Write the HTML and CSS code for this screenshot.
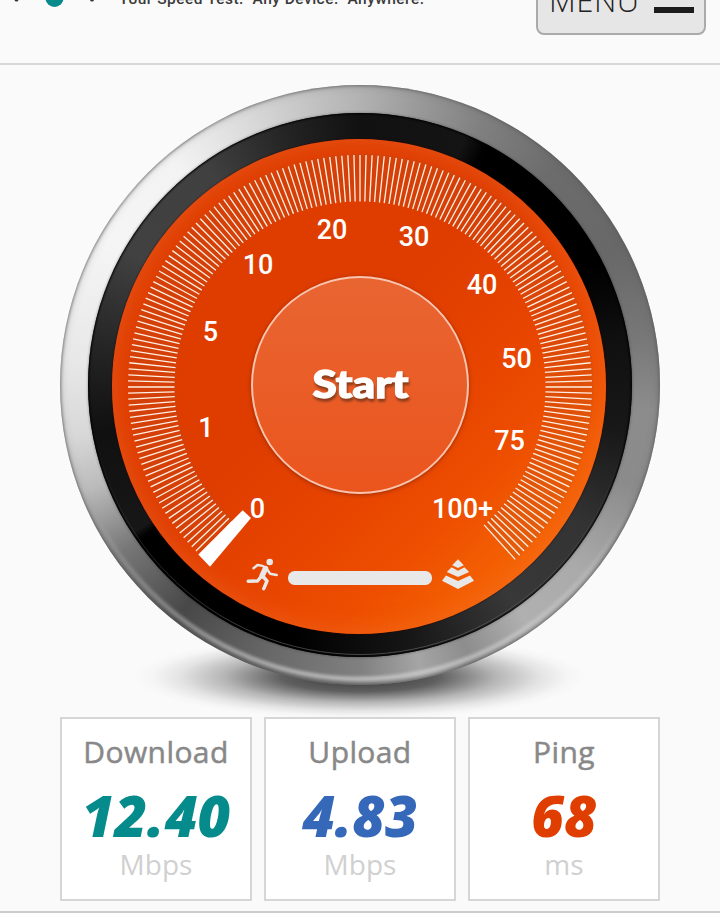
FILE: index.html
```html
<!DOCTYPE html>
<html lang="en">
<head>
<meta charset="utf-8">
<title>Speed Test</title>
<link rel="stylesheet" href="styles.css">
</head>
<body>
<header class="header">
  <svg class="brand" width="440" height="20" viewBox="0 0 440 20">
    <circle cx="54.5" cy="-2" r="9" fill="#068a8c"/>
    <circle cx="16.500" cy="-.5" r="2" fill="#333"/>
    <circle cx="92" cy="-.5" r="2" fill="#333"/>
    <text class="tagline" x="119" y="4" textLength="305" xml:space="preserve">Your Speed Test.  Any Device.  Anywhere.</text>
  </svg>
  <button class="menu"><span class="menu-label">MENU</span><span class="menu-icon"></span></button>
</header>
<main class="main">
  <section class="gauge">
    <div class="shadow"></div>
    <div class="metal"><div class="bezel"><div class="face"></div></div></div>
    <svg class="dial" width="600" height="600" viewBox="60 85 600 600">
      <defs>
        <linearGradient id="btn" x1="0" y1="0" x2="0" y2="1">
          <stop offset="0" stop-color="#e86532"/><stop offset="1" stop-color="#eb551d"/>
        </linearGradient>
        <linearGradient id="glint" x1="0" y1="0" x2="0" y2="1">
          <stop offset=".6" stop-color="#777" stop-opacity="0"/><stop offset="1" stop-color="#777" stop-opacity=".55"/>
        </linearGradient>
        <linearGradient id="rim" x1="0" y1="0" x2="0" y2="1">
          <stop offset=".7" stop-color="#ddd" stop-opacity="0"/><stop offset="1" stop-color="#ddd" stop-opacity=".6"/>
        </linearGradient>
      </defs>
      <circle cx="360" cy="385" r="269.500" fill="none" stroke="url(#glint)"/>
      <circle class="rim" cx="360" cy="384" r="295" fill="none" stroke="url(#rim)"/>
      <path class="band" d="M 219.300 538.500 A 208.500 208.500 0 1 1 499.500 541.900"/>
      <g id="ticks" class="ticks"></g>
      <g class="numbers">
        <text x="257.500" y="518">0</text>
        <text x="206" y="437">1</text>
        <text x="210.500" y="341">5</text>
        <text x="258" y="274">10</text>
        <text x="332" y="239">20</text>
        <text x="414" y="246">30</text>
        <text x="482" y="294">40</text>
        <text x="516.500" y="368">50</text>
        <text x="509.500" y="450">75</text>
        <text x="462.500" y="518">100+</text>
      </g>
      <path d="M198.300 554.500 L210 566.800 L251 518 L242.700 510.200 Z" fill="#fff"/>
      <circle class="start-ring" cx="360" cy="385" r="108" fill="url(#btn)"/>
      <text class="start" x="360.500" y="397.500" textLength="96" lengthAdjust="spacingAndGlyphs">Start</text>
      <g class="runner">
        <circle cx="269.700" cy="562" r="3.300"/>
        <path class="torso" d="M265.500 568.500 L262 576"/>
        <path d="M253.500 568.300 L257.500 565 Q261.500 565 266 567.500 L270 573.700 L276.700 575"/>
        <path class="leg" d="M263 576.500 L267 581 L263.800 588.700 M260.800 577 L257.500 581 L248.200 581.300"/>
      </g>
      <rect x="288" y="571" width="144" height="14" rx="6.500" fill="#e8e8e8"/>
      <g fill="#e8e8e8">
        <path d="M458 559.300 L463.800 565.300 L458 568 L452.200 565.300 Z"/>
        <path d="M451.600 567.300 L458 570.700 L464.400 567.300 L469.200 572 L458 577 L446.800 572 Z"/>
        <path d="M446 575.500 L458 581 L470 575.500 L474 580.700 L458 589 L442 580.700 Z"/>
      </g>
    </svg>
  </section>
  <section class="results">
    <div class="card"><div class="label">Download</div><div class="value download">12.40</div><div class="unit">Mbps</div></div>
    <div class="card"><div class="label">Upload</div><div class="value upload">4.83</div><div class="unit">Mbps</div></div>
    <div class="card"><div class="label">Ping</div><div class="value ping">68</div><div class="unit">ms</div></div>
  </section>
</main>
<script src="ticks.js"></script>
</body>
</html>
```
FILE: styles.css
```css
* { box-sizing: border-box; }
body { margin: 0; height: 913px; overflow: hidden; background: #fafafa; font-family: "Open Sans", sans-serif; border-bottom: 2px solid #ccc; }
.header { height: 65px; border-bottom: 2px solid #d8d8d8; display: flex; justify-content: space-between; align-items: flex-start; padding-right: 14px; overflow: hidden; }
.brand { display: block; }
.tagline { font: 500 15.5px Roboto, sans-serif; fill: #3a3a3a; white-space: pre; }
.menu { width: 170px; height: 70px; margin: -35px 0 0; padding: 0 10px 0 11px; display: flex; justify-content: space-between; align-items: flex-end; background: #e6e6e6; border: 2px solid #aaa; border-radius: 8px; color: #222; font-family: "Open Sans", sans-serif; }
.menu-label { font-size: 31px; font-weight: 300; line-height: 30px; height: 48px; letter-spacing: .5px; }
.menu-icon { width: 40px; height: 40px; margin-bottom: 20px; border-bottom: 6px solid #1c1c1c; }
.main { padding: 20px 60px 0; }
.gauge { position: relative; height: 632px; }
.shadow { position: absolute; left: 75px; top: 550px; width: 450px; height: 84px; background: radial-gradient(closest-side, rgba(0,0,0,.78), rgba(0,0,0,.62) 35%, rgba(0,0,0,.28) 60%, rgba(0,0,0,.09) 80%, rgba(0,0,0,.02) 92%, transparent); }
.metal { position: relative; width: 600px; height: 600px; padding: 28px; border-radius: 50%; box-shadow: inset 0 0 3px 1px rgba(90,90,90,.7), inset 0 0 8px rgba(90,90,90,.3);
  background: conic-gradient(#b2b2b2 0deg, #999 12deg, #808080 25deg, #6c6c6c 42deg, #686868 62deg, #777 80deg, #8c8c8c 95deg, #8b8b8b 110deg, #aaa 130deg, #b0b0b0 145deg, #8d8d8d 158deg, #a5a5a5 168deg, #808080 180deg, #696969 198deg, #484848 218deg, #777 235deg, #bbb 249deg, #d8d8d8 260deg, #e8e8e8 275deg, #f5f5f5 300deg, #f3f3f3 320deg, #ddd 335deg, #c3c3c3 350deg, #b2b2b2 360deg); }
.bezel { width: 544px; height: 544px; padding: 26px 26px 23px 24px; border-radius: 50%; box-shadow: inset 0 0 2px 1px #000, 0 0 3px rgba(0,0,0,.4);
  background: conic-gradient(#111 0deg, #141414 23deg, #000 28deg, #000 63deg, #101010 80deg, #181818 100deg, #333 122deg, #383838 145deg, #151515 170deg, #080808 185deg, #000 195deg, #000 235deg, #171717 237deg, #101010 260deg, #272727 280deg, #414141 300deg, #404040 325deg, #222 345deg, #111 360deg); }
.face { width: 494px; height: 495px; border-radius: 50%; box-shadow: inset 0 0 22px 3px rgba(240,110,50,.42), 0 0 2px #300;
  background: linear-gradient(135deg, #df3d00 0%, #df3d00 45%, #e74400 60%, #ed4e00 72%, #f86a05 88%); }
.dial { position: absolute; left: 0; top: 0; }
.rim { stroke-width: 5; filter: blur(1.5px); }
.band { fill: none; stroke: rgba(170,80,40,.2); stroke-width: 47; }
.ticks { stroke: #fff0e4; stroke-width: 1.3; }
.numbers { font: 500 27px Roboto, sans-serif; fill: #fff; text-anchor: middle; }
.start-ring { stroke: #f9c4ae; stroke-width: 2; filter: drop-shadow(0 1px 2px rgba(90,20,0,.5)); }
.start { font: 900 37px Lato, sans-serif; fill: #fff; stroke: #fff; stroke-width: 1.3; text-anchor: middle; filter: drop-shadow(1px 3px 1px rgba(80,40,20,.6)); }
.runner { fill: none; stroke: #e8e8e8; stroke-width: 2.4; stroke-linecap: round; stroke-linejoin: round; }
.runner circle { fill: #e8e8e8; stroke: none; }
.runner .torso { stroke-width: 5.4; }
.runner .leg { stroke-width: 3.4; }
.results { display: grid; grid-template-columns: repeat(3, 1fr); gap: 12px; position: relative; }
.card { height: 184px; padding-top: 13px; border: 2px solid #d6d6d6; background: #fff; text-align: center; }
.label { font-size: 30px; line-height: 40px; font-weight: 500; letter-spacing: .4px; -webkit-text-stroke: .5px #888; color: #888; }
.value { font-size: 56.5px; line-height: 74px; font-weight: 800; font-style: italic; margin-top: 7px; }
.download { color: #068b8c; }
.upload { color: #3568b9; }
.ping { color: #e03d00; }
.unit { font-size: 28px; line-height: 30px; margin-top: -4px; color: #d0d0d0; }
```
FILE: ticks.js
```js
const group = document.getElementById("ticks");
for (let angle = -136.5; angle <= 138; angle += 1.5) {
  const line = document.createElementNS("http://www.w3.org/2000/svg", "line");
  line.setAttribute("x1", 360);
  line.setAttribute("x2", 360);
  line.setAttribute("y1", 155);
  line.setAttribute("y2", 201.500);
  line.setAttribute("transform", `rotate(${angle} 360 387)`);
  group.appendChild(line);
}
```
